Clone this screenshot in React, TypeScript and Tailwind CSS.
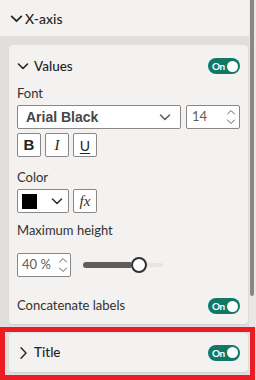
import { useState } from 'react'

function Down({ className = '' }: { className?: string }) {
  return (
    <svg viewBox="0 0 12 12" className={className} fill="none" stroke="currentColor" strokeWidth="1.6" strokeLinecap="round" strokeLinejoin="round" aria-hidden>
      <polyline points="1.5,4 6,8.5 10.5,4" />
    </svg>
  )
}

function Right({ className = '' }: { className?: string }) {
  return (
    <svg viewBox="0 0 12 12" className={className} fill="none" stroke="currentColor" strokeWidth="1.4" strokeLinecap="round" strokeLinejoin="round" aria-hidden>
      <polyline points="4,0.8 9,6 4,11.2" />
    </svg>
  )
}

function Spin() {
  return (
    <svg viewBox="0 0 10 18" className="h-[18px] w-[10px] text-[#605e5c]" fill="none" stroke="currentColor" strokeWidth="1" strokeLinecap="round" aria-hidden>
      <polyline points="1.5,6 5,2.5 8.5,6" />
      <polyline points="1.5,12 5,15.5 8.5,12" />
    </svg>
  )
}

function Toggle() {
  return (
    <div className="flex h-4 w-8 items-center justify-between rounded-full bg-[#117865] pl-[4px] pr-[2px]">
      <span className="text-[10px] leading-none font-bold tracking-[-0.5px] text-white">On</span>
      <span className="h-[11px] w-[11px] rounded-full bg-white" />
    </div>
  )
}

export default function App() {
  const [value] = useState(40)

  return (
    <div className="flex h-[380px] w-[256px] overflow-hidden bg-[#e1dfdd] font-['Lato',sans-serif] text-[#252423]">
      <div className="relative flex w-[249px] flex-col">
        <div className="flex h-9 items-center gap-[2px] bg-[#f3f2f1] pl-[10px]">
          <Down className="h-[13px] w-[13px] text-[#252423]" />
          <span className="text-[14px] font-medium">X-axis</span>
        </div>

        <div className="flex flex-col gap-[9px] pt-[9px] pr-[1px] pl-[9px]">
          <div className="flex flex-col rounded-[4px] bg-[#f3f2f1] px-2 pt-[10px] pb-[9px] shadow-[0_1px_1px_rgba(0,0,0,0.08)]">
            <div className="flex h-[22px] items-center justify-between">
              <div className="flex items-center gap-[5px]">
                <Down className="h-3 w-3 text-[#252423]" />
                <span className="text-[13.5px] font-medium">Values</span>
              </div>
              <Toggle />
            </div>

            <div className="mt-[7px] h-[18px] text-[13px] leading-[18px] text-[#323130]">Font</div>
            <div className="mt-[3px] flex gap-[5px]">
              <div className="flex h-6 w-[164px] items-center justify-between rounded-[2px] border border-[#8a8886] bg-white pr-[9px] pl-[8px]">
                <span className="font-['Liberation_Sans',sans-serif] text-[14px] font-black text-[#484644]">Arial Black</span>
                <Down className="h-3 w-3 text-[#605e5c]" />
              </div>
              <div className="flex h-6 w-[54px] items-center justify-between rounded-[2px] border border-[#8a8886] bg-white pr-[3px] pl-[5px]">
                <span className="text-[13px] text-[#605e5c]">14</span>
                <Spin />
              </div>
            </div>

            <div className="mt-[4px] flex gap-[4px]">
              <div className="flex h-6 w-6 items-center justify-center rounded-[2px] border border-[#8a8886] bg-white font-['Liberation_Sans',sans-serif] text-[15px] font-bold text-[#252423]">B</div>
              <div className="flex h-6 w-6 items-center justify-center rounded-[2px] border border-[#8a8886] bg-white font-['Liberation_Serif',serif] text-[15px] italic text-[#252423]">I</div>
              <div className="flex h-6 w-6 items-center justify-center rounded-[2px] border border-[#8a8886] bg-white text-[14px] text-[#252423] underline underline-offset-2">U</div>
            </div>

            <div className="mt-[11px] h-[18px] text-[13px] leading-[18px] text-[#323130]">Color</div>
            <div className="mt-[3px] flex gap-[4px]">
              <div className="flex h-6 w-[52px] items-center justify-between rounded-[2px] border border-[#8a8886] bg-white pr-[5px] pl-[4px]">
                <span className="h-[15px] w-[15px] bg-black" />
                <Down className="h-3 w-3 text-[#323130]" />
              </div>
              <div className="flex h-6 w-6 items-center justify-center rounded-[2px] border border-[#8a8886] bg-white font-['Liberation_Serif',serif] text-[15px] italic text-[#323130]">fx</div>
            </div>

            <div className="mt-[8px] h-[18px] text-[13px] leading-[18px] text-[#323130]">Maximum height</div>
            <div className="mt-[14px] flex items-center gap-3">
              <div className="flex h-6 w-[54px] items-center justify-between rounded-[2px] border border-[#8a8886] bg-white pr-[2px] pl-[4px]">
                <span className="text-[13px] text-[#605e5c]">{value} %</span>
                <Spin />
              </div>
              <div className="flex w-[80px] items-center">
                <div className="h-[6px] w-[48px] rounded-l-full bg-[#605e5c]" />
                <div className="h-4 w-4 shrink-0 rounded-full border-2 border-[#323130] bg-white" />
                <div className="h-[4px] flex-1 rounded-r-full bg-[#e8e6e4]" />
              </div>
            </div>

            <div className="mt-[20px] flex h-[18px] items-center justify-between">
              <span className="text-[13px] text-[#323130]">Concatenate labels</span>
              <Toggle />
            </div>
          </div>

          <div className="flex h-[39px] items-center justify-between rounded-[4px] bg-[#f3f2f1] px-2 shadow-[0_1px_1px_rgba(0,0,0,0.08)]">
            <div className="flex items-center gap-[5px]">
              <Right className="h-3 w-3 text-[#252423]" />
              <span className="text-[13.5px] font-medium">Title</span>
            </div>
            <Toggle />
          </div>
        </div>
      </div>

      <div className="flex w-[7px] flex-col bg-[#e9e8e7] pl-[1px]">
        <div className="h-[296px] w-[4px] rounded-b-[2px] bg-[#8a8886]" />
      </div>

      <div className="pointer-events-none absolute top-[327px] left-0 h-[53px] w-[255px] border-[5px] border-[#ed1c24]" />
    </div>
  )
}
